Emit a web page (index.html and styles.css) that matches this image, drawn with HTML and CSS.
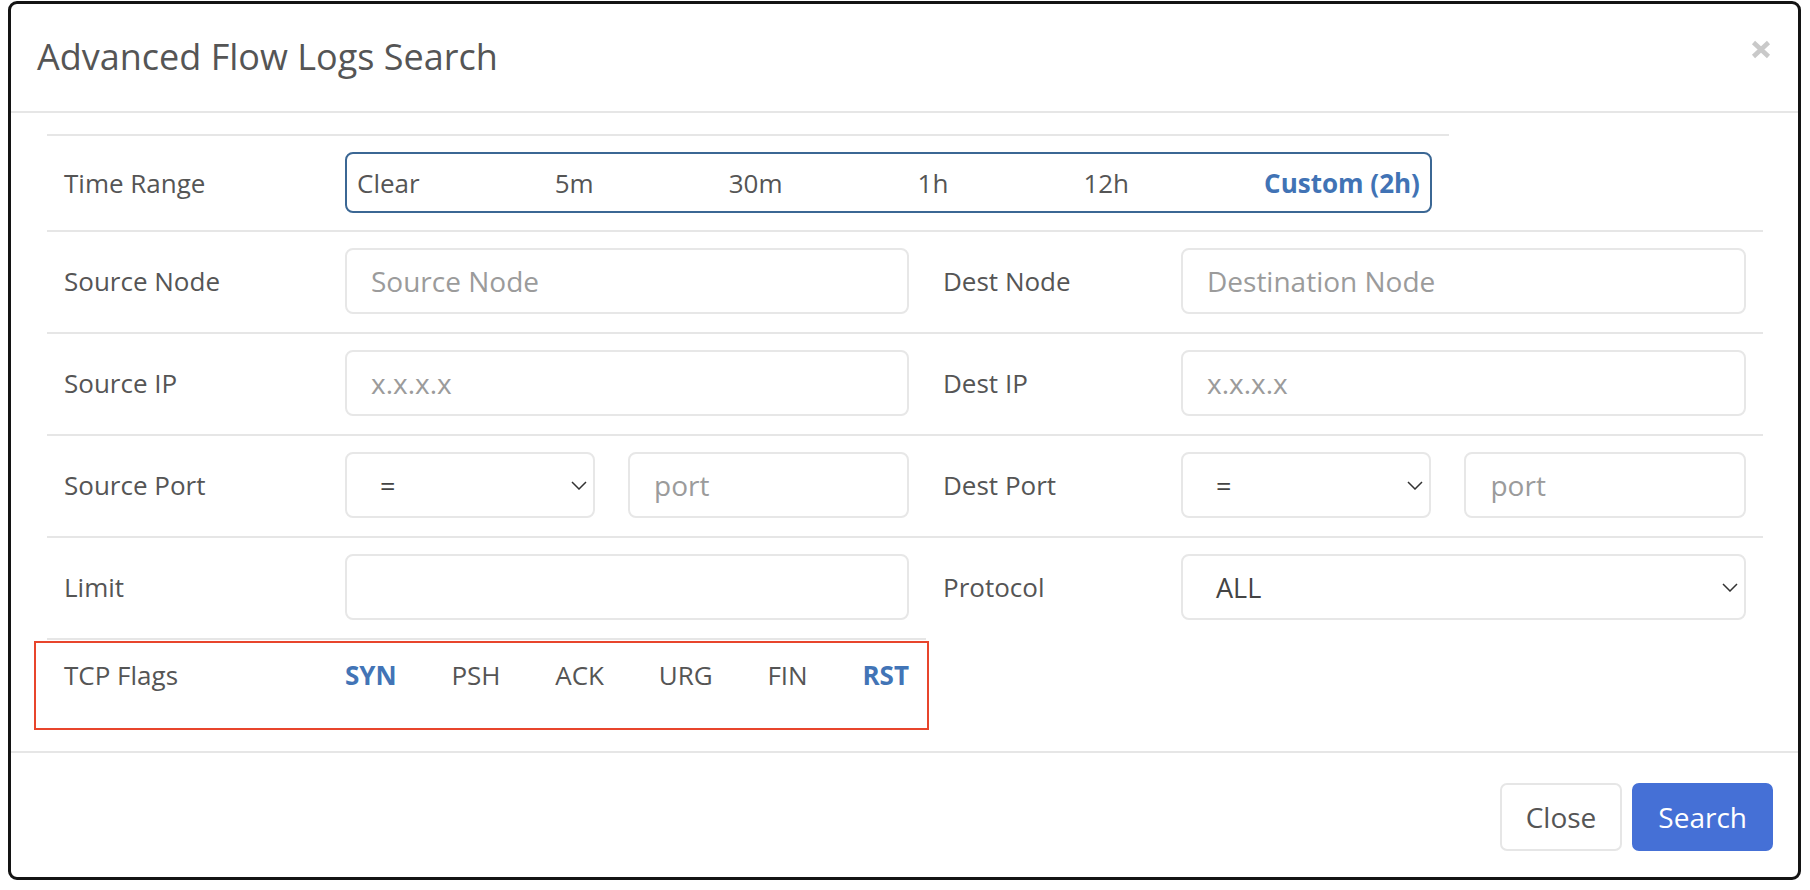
FILE: index.html
```html
<!DOCTYPE html>
<html lang="en">
<head>
<meta charset="utf-8">
<title>Advanced Flow Logs Search</title>
<link rel="stylesheet" href="styles.css">
</head>
<body>
<div class="modal">
  <header class="modal-header">
    <h4 class="modal-title">Advanced Flow Logs Search</h4>
    <button class="close" aria-label="Close">
      <svg width="20" height="19" viewBox="0 0 20 19"><path d="M2.5 2.5 L17.5 16.5 M17.5 2.5 L2.5 16.5" stroke="#c9c9c9" stroke-width="4.6" fill="none"/></svg>
    </button>
  </header>
  <div class="modal-body">
    <div class="row row-time">
      <div class="label">Time Range</div>
      <div class="range">
        <span>Clear</span><span>5m</span><span>30m</span><span>1h</span><span>12h</span><span class="active">Custom (2h)</span>
      </div>
    </div>
    <div class="row">
      <div class="label">Source Node</div>
      <input class="field" type="text" placeholder="Source Node">
      <div class="label">Dest Node</div>
      <input class="field" type="text" placeholder="Destination Node">
    </div>
    <div class="row">
      <div class="label">Source IP</div>
      <input class="field" type="text" placeholder="x.x.x.x">
      <div class="label">Dest IP</div>
      <input class="field" type="text" placeholder="x.x.x.x">
    </div>
    <div class="row">
      <div class="label">Source Port</div>
      <div class="pair">
        <div class="select"><span>=</span><svg class="chev" width="16" height="9" viewBox="0 0 16 9"><path d="M1 1 L8 8 L15 1" stroke="#333" stroke-width="1.5" fill="none"/></svg></div>
        <input class="field" type="text" placeholder="port">
      </div>
      <div class="label">Dest Port</div>
      <div class="pair">
        <div class="select"><span>=</span><svg class="chev" width="16" height="9" viewBox="0 0 16 9"><path d="M1 1 L8 8 L15 1" stroke="#333" stroke-width="1.5" fill="none"/></svg></div>
        <input class="field" type="text" placeholder="port">
      </div>
    </div>
    <div class="row">
      <div class="label">Limit</div>
      <input class="field" type="text">
      <div class="label">Protocol</div>
      <div class="select"><span>ALL</span><svg class="chev" width="16" height="9" viewBox="0 0 16 9"><path d="M1 1 L8 8 L15 1" stroke="#333" stroke-width="1.5" fill="none"/></svg></div>
    </div>
    <div class="row row-flags">
      <div class="label">TCP Flags</div>
      <div class="flags">
        <span class="on">SYN</span><span>PSH</span><span>ACK</span><span>URG</span><span>FIN</span><span class="on">RST</span>
      </div>
    </div>
  </div>
  <footer class="modal-footer">
    <button class="btn btn-default">Close</button>
    <button class="btn btn-primary">Search</button>
  </footer>
</div>
</body>
</html>
```
FILE: styles.css
```css
* { box-sizing: border-box; }

html, body {
  margin: 0;
  background: #fff;
  font-family: "Open Sans", "Liberation Sans", sans-serif;
  color: #555;
}

.modal {
  margin: 1px 0 0 8px;
  width: 1793px;
  height: 879px;
  border: 3px solid #141414;
  border-radius: 9px;
  display: flex;
  flex-direction: column;
}

.modal-header {
  height: 109px;
  border-bottom: 2px solid #e6e6e6;
  display: flex;
  justify-content: space-between;
  align-items: flex-start;
  padding: 0 27px 0 26px;
}

.modal-title {
  margin: 29px 0 0;
  font-size: 36px;
  line-height: 48px;
  font-weight: 400;
  color: #555;
}

.close {
  margin-top: 36px;
  padding: 0;
  border: 0;
  background: none;
  line-height: 0;
}

.modal-body {
  padding: 21px 35px 0 36px;
  flex: 1;
}

.row {
  display: grid;
  grid-template-columns: 247px 564px 204px 565px;
  column-gap: 34px;
  align-items: center;
  padding: 16px 17px 18px;
  border-top: 2px solid #e6e6e6;
}

.row-time {
  grid-template-columns: 247px 1087px;
  width: 1402px;
  padding-bottom: 17px;
}

.label {
  font-size: 26px;
  line-height: 36px;
  color: #555;
}

.range {
  height: 61px;
  border: 2px solid #3b6794;
  border-radius: 8px;
  display: flex;
  justify-content: space-between;
  align-items: center;
  padding: 0 10px;
  font-size: 26px;
  color: #555;
}

.range .active {
  font-weight: 700;
  color: #4173b5;
}

.field {
  height: 66px;
  width: 100%;
  border: 2px solid #e7e7e7;
  border-radius: 8px;
  padding: 0 24px;
  font-family: inherit;
  font-size: 28px;
  color: #555;
  background: #fff;
  outline: none;
}

.field::placeholder {
  color: #9b9b9b;
}

.pair {
  display: grid;
  grid-template-columns: 250fr 281fr;
  column-gap: 33px;
}

.select {
  height: 66px;
  border: 2px solid #e7e7e7;
  border-radius: 8px;
  display: flex;
  justify-content: space-between;
  align-items: center;
  padding: 0 6px 0 33px;
  font-size: 27px;
  color: #444;
}

.row-flags {
  grid-template-columns: 247px 564px;
  width: 879px;
  padding: 14px 17px 0;
  position: relative;
}

.row-flags .label {
  line-height: 42px;
}

.row-flags::after {
  content: "";
  position: absolute;
  left: -13px;
  top: 1px;
  width: 891px;
  height: 85px;
  border: 2px solid #e8452c;
}

.flags {
  display: flex;
  justify-content: space-between;
  font-size: 26px;
  line-height: 42px;
  color: #555;
}

.flags .on {
  font-weight: 700;
  color: #4274b6;
}

.modal-footer {
  border-top: 2px solid #e6e6e6;
  display: flex;
  justify-content: flex-end;
  gap: 10px;
  padding: 30px 25px 0 0;
  height: 126px;
}

.btn {
  height: 68px;
  padding: 0 24px;
  border-radius: 7px;
  font-family: inherit;
  font-size: 28px;
  border: 2px solid #e6e6e6;
  background: #fff;
  color: #555;
}

.btn-primary {
  background: #4570d6;
  border-color: #4570d6;
  color: #fff;
}
```
